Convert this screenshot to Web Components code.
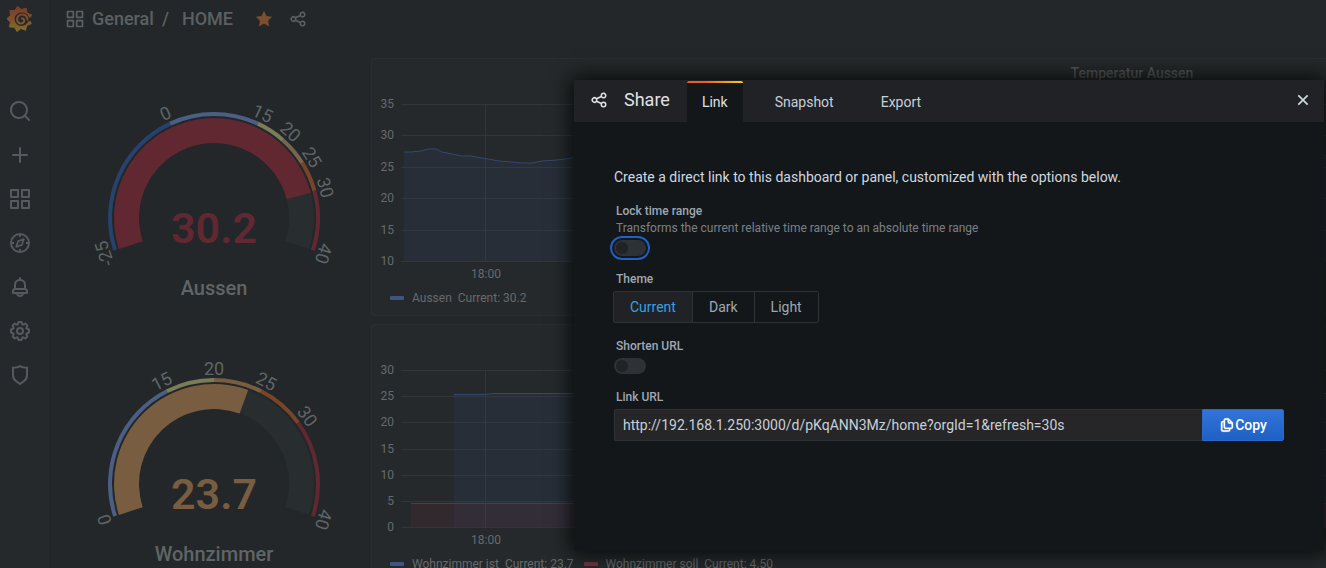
<!DOCTYPE html>
<html lang="en">
<head>
<meta charset="utf-8">
<meta name="viewport" content="width=device-width, initial-scale=1">
<title>HOME - Grafana</title>
<style>
  html, body { margin: 0; height: 100%; overflow: hidden; background: #232729; }
  body { font: 400 14px/20px Roboto, "Liberation Sans", sans-serif; color: #c7d0d9; }
</style>
</head>
<body>
<app-shell>
  <side-nav slot="nav"></side-nav>
  <dash-toolbar slot="main" folder="General" name="HOME"></dash-toolbar>
  <dash-grid slot="main">
    <gauge-panel name="Aussen" value="30.2" min="-25" max="40" stops="-25:#27426c,0:#4a5f83,15:#7b7c58,20:#79644d,25:#7a4527,30:#612831"></gauge-panel>
    <graph-panel name="Temperatur Aussen" ticks="35,30,25,20,15,10" kind="outside">
      <legend-item color="#3d5580" name="Aussen" value="30.2"></legend-item>
    </graph-panel>
    <gauge-panel name="Wohnzimmer" value="23.7" min="0" max="40" stops="0:#4a5f83,15:#7b7c58,20:#785d41,25:#7a4527,30:#612831"></gauge-panel>
    <graph-panel ticks="30,25,20,15,10,5,0" kind="room">
      <legend-item color="#3d5580" name="Wohnzimmer ist" value="23.7"></legend-item>
      <legend-item color="#75343e" name="Wohnzimmer soll" value="4.50"></legend-item>
    </graph-panel>
  </dash-grid>
  <share-dialog slot="dialog"></share-dialog>
</app-shell>

<script>
const ICONS = {
  search: '<path d="M21.71,20.29,18,16.61A9,9,0,1,0,16.61,18l3.68,3.68a1,1,0,0,0,1.42,0A1,1,0,0,0,21.71,20.29ZM11,18a7,7,0,1,1,7-7A7,7,0,0,1,11,18Z"/>',
  plus: '<path d="M19,11H13V5a1,1,0,0,0-2,0v6H5a1,1,0,0,0,0,2h6v6a1,1,0,0,0,2,0V13h6a1,1,0,0,0,0-2Z"/>',
  apps: '<path d="M10,13H3a1,1,0,0,0-1,1v7a1,1,0,0,0,1,1h7a1,1,0,0,0,1-1V14A1,1,0,0,0,10,13ZM9,20H4V15H9ZM21,2H14a1,1,0,0,0-1,1v7a1,1,0,0,0,1,1h7a1,1,0,0,0,1-1V3A1,1,0,0,0,21,2ZM20,9H15V4h5Zm1,4H14a1,1,0,0,0-1,1v7a1,1,0,0,0,1,1h7a1,1,0,0,0,1-1V14A1,1,0,0,0,21,13Zm-1,7H15V15h5ZM10,2H3A1,1,0,0,0,2,3v7a1,1,0,0,0,1,1h7a1,1,0,0,0,1-1V3A1,1,0,0,0,10,2ZM9,9H4V4H9Z"/>',
  compass: '<g fill="none" stroke="currentColor" stroke-width="2" stroke-linejoin="round"><circle cx="12" cy="12" r="9"/><path d="M12 3v3M12 18v3M3 12h3M18 12h3M15.8 8.2l-2 5.6-5.6 2 2-5.6z" stroke-width="1.8"/></g>',
  bell: '<path d="M18,13.18V10a6,6,0,0,0-5-5.91V3a1,1,0,0,0-2,0V4.09A6,6,0,0,0,6,10v3.18A3,3,0,0,0,4,16v2a1,1,0,0,0,1,1H8.14a4,4,0,0,0,7.72,0H19a1,1,0,0,0,1-1V16A3,3,0,0,0,18,13.18ZM8,10a4,4,0,0,1,8,0v3H8Zm4,10a2,2,0,0,1-1.72-1h3.44A2,2,0,0,1,12,20Zm6-3H6V16a1,1,0,0,1,1-1H17a1,1,0,0,1,1,1Z"/>',
  cog: '<path d="M21.32,9.55l-1.89-.63.89-1.78A1,1,0,0,0,20.13,6L18,3.87a1,1,0,0,0-1.15-.19l-1.78.89-.63-1.89A1,1,0,0,0,13.5,2h-3a1,1,0,0,0-.95.68L8.92,4.57,7.14,3.68A1,1,0,0,0,6,3.87L3.87,6a1,1,0,0,0-.19,1.15l.89,1.78-1.89.63A1,1,0,0,0,2,10.5v3a1,1,0,0,0,.68.95l1.89.63-.89,1.78A1,1,0,0,0,3.87,18L6,20.13a1,1,0,0,0,1.15.19l1.78-.89.63,1.89a1,1,0,0,0,.95.68h3a1,1,0,0,0,.95-.68l.63-1.89,1.78.89A1,1,0,0,0,18,20.13L20.13,18a1,1,0,0,0,.19-1.15l-.89-1.78,1.89-.63A1,1,0,0,0,22,13.5v-3A1,1,0,0,0,21.32,9.55ZM20,12.78l-1.2.4A2,2,0,0,0,17.64,16l.57,1.14-1.1,1.1L16,17.64a2,2,0,0,0-2.79,1.16l-.4,1.2H11.22l-.4-1.2A2,2,0,0,0,8,17.64l-1.14.57-1.1-1.1L6.36,16A2,2,0,0,0,5.2,13.18L4,12.78V11.22l1.2-.4A2,2,0,0,0,6.36,8L5.79,6.89l1.1-1.1L8,6.36A2,2,0,0,0,10.82,5.2l.4-1.2h1.56l.4,1.2A2,2,0,0,0,16,6.36l1.14-.57,1.1,1.1L17.64,8a2,2,0,0,0,1.16,2.79l1.2.4ZM12,8a4,4,0,1,0,4,4A4,4,0,0,0,12,8Zm0,6a2,2,0,1,1,2-2A2,2,0,0,1,12,14Z"/>',
  shield: '<path d="M19.63,3.65a1,1,0,0,0-.84-.2,8,8,0,0,1-6.22-1.27,1,1,0,0,0-1.14,0A8,8,0,0,1,5.21,3.45a1,1,0,0,0-.84.2A1,1,0,0,0,4,4.43v7.45a9,9,0,0,0,3.77,7.33l3.65,2.6a1,1,0,0,0,1.16,0l3.65-2.6A9,9,0,0,0,20,11.88V4.43A1,1,0,0,0,19.63,3.65ZM18,11.88a7,7,0,0,1-2.93,5.7L12,19.77,8.93,17.58A7,7,0,0,1,6,11.88V5.58a10,10,0,0,0,6-1.39,10,10,0,0,0,6,1.39Z"/>',
  star: '<path d="M12 2.2l3 6.3 6.9.9-5 4.8 1.2 6.9L12 17.8 5.9 21.100l1.200-6.900-5-4.800 6.900-.9z" stroke="currentColor" stroke-linejoin="round"/>',
  share: '<path d="M18,14a4,4,0,0,0-3.08,1.48l-5.1-2.35a3.64,3.64,0,0,0,0-2.26l5.1-2.35A4,4,0,1,0,14,6a4.17,4.17,0,0,0,.07.71L8.79,9.14a4,4,0,1,0,0,5.72l5.28,2.43A4.17,4.17,0,0,0,14,18a4,4,0,1,0,4-4ZM18,4a2,2,0,1,1-2,2A2,2,0,0,1,18,4ZM6,14a2,2,0,1,1,2-2A2,2,0,0,1,6,14Zm12,6a2,2,0,1,1,2-2A2,2,0,0,1,18,20Z"/>',
  copy: '<path d="M21,8.94a1.31,1.31,0,0,0-.06-.27l0-.09a1.07,1.07,0,0,0-.19-.28h0l-6-6h0a1.07,1.07,0,0,0-.28-.19.32.32,0,0,0-.09,0A.88.88,0,0,0,14.05,2H10A3,3,0,0,0,7,5V6H6A3,3,0,0,0,3,9V19a3,3,0,0,0,3,3h8a3,3,0,0,0,3-3V18h1a3,3,0,0,0,3-3V9S21,9,21,8.94ZM15,5.41,17.59,8H16a1,1,0,0,1-1-1ZM15,19a1,1,0,0,1-1,1H6a1,1,0,0,1-1-1V9A1,1,0,0,1,6,8H7v7a3,3,0,0,0,3,3h5Zm4-4a1,1,0,0,1-1,1H10a1,1,0,0,1-1-1V5a1,1,0,0,1,1-1h3V7a3,3,0,0,0,3,3h3Z" stroke="currentColor" stroke-width=".6"/>',
  times: '<path d="M5 5l14 14M19 5L5 19" fill="none" stroke="currentColor" stroke-width="2.500"/>'
};

class Base extends HTMLElement {
  connectedCallback() {
    if (this.shadowRoot) return;
    this.attachShadow({ mode: 'open' }).innerHTML =
      `<style>*{box-sizing:border-box}${this.css()}</style>${this.html()}`;
  }
  attr(name) { return this.getAttribute(name) || ''; }
}
const define = (name, cls) => customElements.define(name, cls);

define('ui-icon', class extends Base {
  css() { return `:host{display:block;flex:none;width:${this.attr('size')}px;height:${this.attr('size')}px}svg{display:block;width:100%;height:100%}`; }
  html() { return `<svg viewBox="0 0 24 24" fill="currentColor" aria-hidden="true">${ICONS[this.attr('name')]}</svg>`; }
});

define('app-shell', class extends Base {
  css() { return `
    :host{display:flex;height:100vh;overflow:hidden;position:relative}
    main{flex:1;min-width:0;overflow:hidden}`; }
  html() { return `<slot name="nav"></slot><main><slot name="main"></slot></main><slot name="dialog"></slot>`; }
});

define('brand-logo', class extends Base {
  css() { return `:host{display:block;width:26px;height:28px}svg{display:block}`; }
  html() {
    const pts = [];
    for (let i = 0; i < 18; i++) {
      const a = Math.PI * (i / 9) - 1.72, r = i % 2 ? 9.6 : 12.8;
      pts.push(`${(12.5 + r * Math.cos(a)).toFixed(1)},${(14 + r * Math.sin(a)).toFixed(1)}`);
    }
    return `<svg width="26" height="28" viewBox="0 0 26 28" aria-hidden="true">
      <defs><linearGradient id="g" gradientUnits="userSpaceOnUse" x1="0" y1="0" x2="0" y2="28"><stop offset="0" stop-color="#7b3a2c"/><stop offset=".5" stop-color="#80502a"/><stop offset="1" stop-color="#80702b"/></linearGradient></defs>
      <polygon points="${pts.join(' ')}" fill="url(#g)" stroke="url(#g)" stroke-linejoin="round"/>
      <path d="M14.500 7.600C10.500 7.500 7.600 10.600 7.700 14.300c.1 3.800 3 6.700 6.800 6.700 3 0 5.700-1.700 6.700-4.400l4.800-1.600v-2l-4-.6C21.100 9.400 18 7.700 14.500 7.600z" fill="#25292c"/>
      <path d="M20.500 14.500c-.4-3.300-2.800-5-5.500-5-3.200 0-5 2.200-4.900 5 .1 2.500 2 4 4.100 3.900 2-.1 3.100-1.500 3-3-.1-1.300-1.100-2.100-2.200-2" fill="none" stroke="url(#g)" stroke-width="2" stroke-linecap="round"/></svg>`;
  }
});

define('side-nav', class extends Base {
  css() { return `
    :host{display:block;flex:none;width:49px;height:100%;background:#25292c;border-right:1px solid #212527;color:#545a60}
    brand-logo{margin:5px 0 0 7px}
    nav{display:flex;flex-direction:column;gap:20px;margin:66px 0 0 8px}
    a{color:inherit;width:24px}`; }
  html() {
    const items = [['search', 'Search'], ['plus', 'Create'], ['apps', 'Dashboards'], ['compass', 'Explore'], ['bell', 'Alerting'], ['cog', 'Configuration'], ['shield', 'Server Admin']];
    return `<brand-logo></brand-logo><nav>${items.map(([i, t]) => `<a href="#${i}" aria-label="${t}"><ui-icon name="${i}" size="24"></ui-icon></a>`).join('')}</nav>`;
  }
});

define('dash-toolbar', class extends Base {
  css() { return `
    :host{display:flex;align-items:center;height:37px;padding-left:15px;font-size:18px;line-height:24px;font-weight:500;color:#5b6062}
    a{color:inherit;text-decoration:none}
    .sep{margin:0 13px 0 8px}
    a:first-of-type{margin-left:7px}
    button{all:unset;display:block;cursor:pointer}
    .star{margin-left:22px;color:#7e4f2d}
    .share{margin-left:16px}`; }
  html() { return `<ui-icon name="apps" size="20"></ui-icon><a href="#folder">${this.attr('folder')}</a><span class="sep">/</span><a href="#home">${this.attr('name')}</a>
    <button class="star" aria-label="Unmark as favorite"><ui-icon name="star" size="18"></ui-icon></button>
    <button class="share" aria-label="Share dashboard"><ui-icon name="share" size="18"></ui-icon></button>`; }
});

define('dash-grid', class extends Base {
  css() { return `:host{display:grid;grid-template-columns:306px minmax(1522px,1fr);grid-auto-rows:258px;gap:8px 4px;padding:21px 0 0 12px;margin-left:-1px}`; }
  html() { return `<slot></slot>`; }
});

define('gauge-panel', class extends Base {
  css() { return `
    :host{display:block}
    svg{display:block;margin:0 auto}
    text{text-anchor:middle;fill:#5f6566;font-size:18px;font-weight:400}
    .value{font-size:43px;font-weight:600}
    .name{font-size:20px;font-weight:500}`; }
  html() {
    const min = +this.attr('min'), max = +this.attr('max'), value = +this.attr('value');
    const stops = this.attr('stops').split(',').map(s => { const [v, c] = s.split(':'); return [+v, c]; });
    const CX = 153, CY = 160;
    // The dial sweeps 216 degrees, starting 18 degrees below the left horizontal.
    const deg = v => (v - min) / (max - min) * 216 - 108;
    const pt = (r, d) => { const a = d * Math.PI / 180; return `${(CX + r * Math.sin(a)).toFixed(2)} ${(CY - r * Math.cos(a)).toFixed(2)}`; };
    const band = (r1, r0, a, b, fill) => {
      const big = b - a > 180 ? 1 : 0;
      return `<path d="M${pt(r1, a)}A${r1} ${r1} 0 ${big} 1 ${pt(r1, b)}L${pt(r0, b)}A${r0} ${r0} 0 ${big} 0 ${pt(r0, a)}Z" fill="${fill}"/>`;
    };
    const color = stops.filter(([v]) => v <= value).pop()[1];
    let out = band(100, 75, -108, 108, '#282d2f') + band(100, 75, -108, deg(value), color);
    stops.forEach(([v, c], i) => { out += band(106, 102, deg(v), deg(i + 1 < stops.length ? stops[i + 1][0] : max), c); });
    [...stops.map(s => s[0]), max].forEach(v => {
      out += `<text transform="rotate(${deg(v).toFixed(2)} ${CX} ${CY})" x="${CX}" y="${CY - 109}">${v}</text>`;
    });
    return `<svg width="306" height="258" role="img" aria-label="${this.attr('name')} ${value}">${out}
      <text class="value" x="${CX}" y="185" style="fill:${color}">${value}</text><text class="name" x="${CX}" y="237">${this.attr('name')}</text></svg>`;
  }
});

define('legend-item', class extends Base {
  css() { return `
    :host{display:flex;align-items:center;font-size:12px;line-height:16px;color:#666a6c;white-space:nowrap}
    i{width:14px;height:4px;border-radius:1px;margin-right:8px;background:${this.attr('color')}}
    b{font-weight:inherit;margin-left:6px}`; }
  html() { return `<i></i><span>${this.attr('name')}</span><b>Current: ${this.attr('value')}</b>`; }
});

define('graph-panel', class extends Base {
  css() { return `
    :host{display:flex;flex-direction:column;background:#25292b;border:1px solid #2a2e30;border-radius:3px;overflow:hidden}
    h2{margin:0;height:28px;font-size:14px;line-height:28px;font-weight:500;text-align:center;color:#53585a}
    svg{display:block;width:100%;height:203px}
    text{font-size:12px;fill:#666a6c}
    .y{text-anchor:end}.x{text-anchor:middle}
    .grid{stroke:#323638;fill:none}
    .legend{display:flex;gap:10px;padding-left:18px}`; }
  html() {
    const ticks = this.attr('ticks').split(',');
    const top = 17, bottom = 174, step = (bottom - top) / (ticks.length - 1);
    const area = (d, fill) => `<path d="${d}" fill="${fill}" fill-opacity=".12"/>`;
    const stroke = (d, color) => `<path d="${d}" fill="none" stroke="${color}"/>`;
    let out = '';
    if (this.attr('kind') === 'outside') {
      const line = 'M32 65H39L49 64L56 62H64L70 65L80 67L90 69H99L110 71L127 74L140 75L150 76H160L170 74L185 73L193 72L204 70L230 72L500 76L1500 60';
      out = area(`${line}V${bottom}H32Z`, '#3a5590') + stroke(line, '#34496f');
    } else {
      const actual = 'M82 41.5H113L120 40.5H1522', target = 'M39 150.5H1522';
      out = area(`${actual}V${bottom}H82Z`, '#3a5590') + area(`${target}V${bottom}H39Z`, '#8c2840')
        + stroke(actual, '#34496f') + stroke(target, '#6b303c');
    }
    const ys = ticks.map((t, i) => Math.round(top + i * step));
    const grid = ys.map(y => `M29 ${y + .5}H1522`).join('') + `M113.5 ${top}V${bottom}`;
    return `<h2>${this.attr('name')}</h2>
      <svg aria-hidden="true"><path class="grid" d="${grid}"/>${out}
      ${ys.map((y, i) => `<text class="y" x="22" y="${y + 4}">${ticks[i]}</text>`).join('')}
      <text class="x" x="114" y="191">18:00</text></svg>
      <div class="legend"><slot></slot></div>`;
  }
});

const FIELD_CSS = `
  :host{display:block;margin-top:15px}
  .label{display:block;margin:0 0 4px 2px;font-size:12px;line-height:16px;font-weight:500;color:#9fa7b3}
  small{display:block;margin-top:1px;font-size:12px;line-height:16px;font-weight:400;color:#7b8087}`;

define('toggle-field', class extends Base {
  css() { return `${FIELD_CSS}
    input{appearance:none;display:block;position:relative;width:32px;height:16px;margin:0;border-radius:8px;background:#2c3235;cursor:pointer}
    input::before{content:"";position:absolute;left:2px;top:2px;width:12px;height:12px;border-radius:50%;background:#202226}
    :host([active]) input{box-shadow:0 0 0 2px #131719,0 0 0 4px #1f60c4}`; }
  html() { const d = this.attr('description');
    return `<label class="label" for="t">${this.attr('label')}${d ? `<small>${d}</small>` : ''}</label><input id="t" type="checkbox" role="switch">`; }
});

define('radio-field', class extends Base {
  css() { return `${FIELD_CSS}
    fieldset{border:0;margin:0;padding:0;min-width:0}
    legend{padding:0}
    .group{display:flex;width:max-content;margin-left:-1px;border:1px solid #2c3235;border-radius:2px}
    .group label{padding:0 16px;font-size:14px;line-height:30px;color:#9fa7b3;cursor:pointer}
    .group label+input+label{border-left:1px solid #2c3235}
    .group input{position:absolute;opacity:0;margin:0}
    input:checked+label{background:#202226;color:#33a2e5}`; }
  html() { return `<fieldset><legend class="label">${this.attr('label')}</legend><div class="group">${
    this.attr('options').split(',').map((o, i) => `<input type="radio" name="r" id="r${i}"${i ? '' : ' checked'}><label for="r${i}">${o}</label>`).join('')}</div></fieldset>`; }
});

define('copy-field', class extends Base {
  css() { return `${FIELD_CSS}
    .row{display:flex;height:32px}
    input{flex:1;min-width:0;padding:0 8px;border:1px solid #2c3235;border-right:0;border-radius:2px 0 0 2px;background:#262628;color:#c7d0d9;font:400 14px/20px Roboto,"Liberation Sans",sans-serif;outline:0}
    button{display:flex;align-items:center;justify-content:center;width:82px;padding:0;border:1px solid #2a67ca;border-radius:0 2px 2px 0;background:linear-gradient(#3274d9,#1f60c4);color:#fff;font:500 14px/20px Roboto,"Liberation Sans",sans-serif}`; }
  html() { return `<label class="label" for="u">${this.attr('label')}</label><div class="row"><input id="u" type="text" readonly value="${this.attr('value').replace(/&/g, '&amp;')}"><button><ui-icon name="copy" size="16"></ui-icon>Copy</button></div>`; }
});

define('share-dialog', class extends Base {
  css() { return `
    :host{display:block;position:absolute;top:80px;right:2px;width:750px;max-width:100%;background:#131719;box-shadow:0 0 20px 2px #050606}
    header{display:flex;height:42px;background:#202226}
    h1{display:flex;align-items:center;gap:16px;margin:0;padding:0 17px 2px 16px;font-size:18px;line-height:24px;font-weight:400;color:#e0e1e2}
    nav{display:flex;gap:17px;flex:1;padding-top:1px}
    button{all:unset;cursor:pointer}
    [role=tab]{position:relative;padding:1px 15px 0;line-height:40px;color:#c7d0d9}
    [aria-selected=true]{background:#131719;color:#e0e1e2}
    [aria-selected=true]::before{content:"";position:absolute;inset:0 0 auto;height:2px;border-radius:2px 2px 0 0;background:linear-gradient(to right,#f05a28 30%,#fbca0a 99%)}
    .close{display:flex;align-items:center;padding:0 13px 2px;color:#d0d8e0}
    section{padding:44px 40px 110px}
    p{margin:0;line-height:22px;color:#d0d8e0}`; }
  html() { return `<header><h1><ui-icon name="share" size="18"></ui-icon>Share</h1>
    <nav role="tablist"><button role="tab" aria-selected="true">Link</button><button role="tab">Snapshot</button><button role="tab">Export</button></nav>
    <button class="close" aria-label="Close"><ui-icon name="times" size="16"></ui-icon></button></header>
    <section><p>Create a direct link to this dashboard or panel, customized with the options below.</p>
    <toggle-field active label="Lock time range" description="Transforms the current relative time range to an absolute time range"></toggle-field>
    <radio-field label="Theme" options="Current,Dark,Light"></radio-field>
    <toggle-field label="Shorten URL"></toggle-field>
    <copy-field label="Link URL" value="http://192.168.1.250:3000/d/pKqANN3Mz/home?orgId=1&amp;refresh=30s"></copy-field></section>`; }
});
</script>
</body>
</html>
